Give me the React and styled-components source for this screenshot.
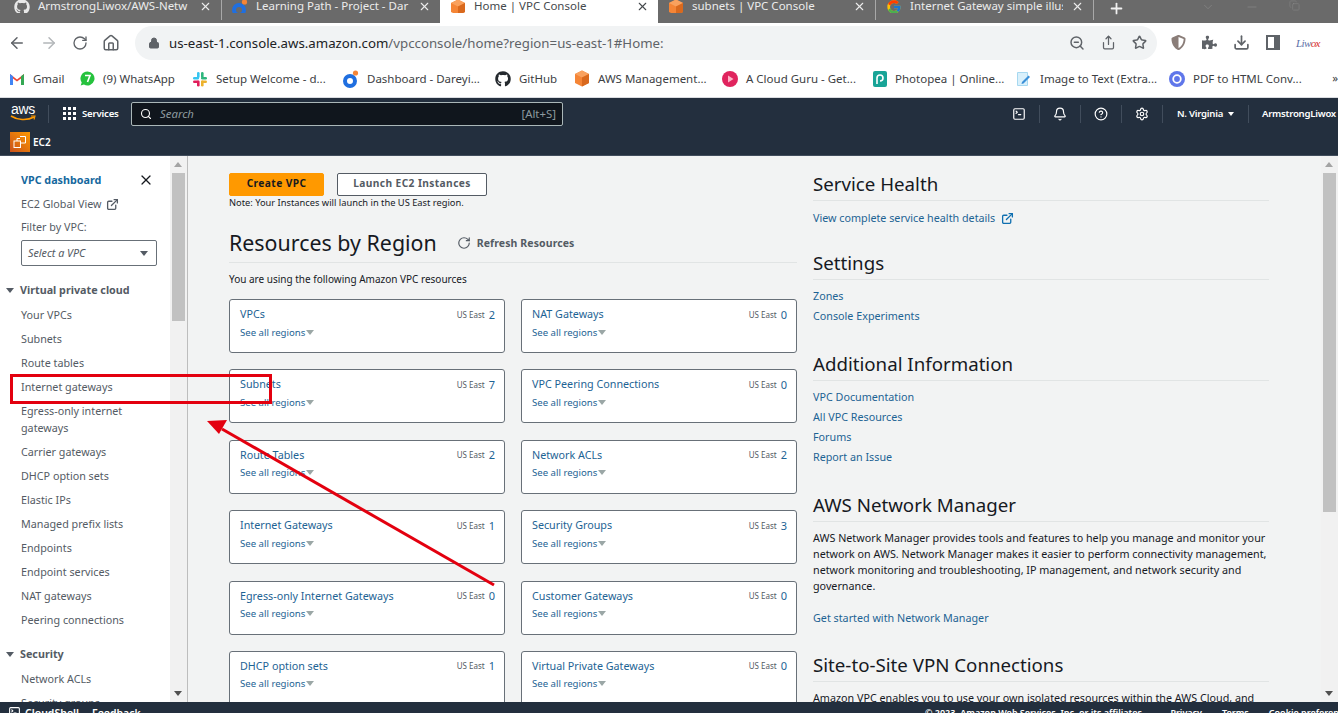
import styled, { createGlobalStyle } from 'styled-components';
import { ArrowLeft, ArrowRight, RotateCw, Home, Lock, ZoomOut, Share, Star, Download, Search, X, Bell, CircleHelp, Settings, ExternalLink, Plus, ChevronDown, Minus, Copy, TerminalSquare } from 'lucide-react';
import { FaGithub, FaPuzzlePiece, FaShieldAlt } from 'react-icons/fa';
import { FcGoogle } from 'react-icons/fc';

const GlobalStyle = createGlobalStyle`
  html, body { margin: 0; padding: 0; height: 713px; overflow: hidden; background: #fff; }
  * { box-sizing: border-box; }
  body { font-family: "Noto Sans", "Open Sans", sans-serif; }
`;

const Page = styled.div`
  position: relative;
  width: 1338px;
  height: 713px;
  overflow: hidden;
  display: flex;
  flex-direction: column;
`;

/* browser chrome */
const TabStrip = styled.div`
  height: 23px;
  flex: none;
  background: #6a6a6a;
  display: flex;
  padding-left: 4px;
  color: #f1f1f1;
  font-size: 11.5px;
`;

const Tab = styled.div`
  width: 218px;
  display: flex;
  align-items: flex-start;
  padding: 0 9px 0 10px;
  gap: 8px;
  line-height: 16px;
  background: ${p => (p.$active ? '#fff' : 'transparent')};
  color: ${p => (p.$active ? '#45494d' : '#ececec')};
  border-right: ${p => (p.$divider ? '1px solid #a8a8a8' : 'none')};
  height: ${p => (p.$active ? '23px' : '20px')};
  svg { flex: none; }
`;

const TabIcon = styled.span`
  width: 16px;
  height: 14px;
  margin-top: -1px;
  flex: none;
  display: flex;
  justify-content: center;
  overflow: hidden;
`;

const TabTitle = styled.span`
  flex: 1;
  overflow: hidden;
  white-space: nowrap;
  margin-top: -2px;
`;

const TabClose = styled.span`
  flex: none;
  display: flex;
`;

const NewTab = styled.div`
  margin-left: 14px;
  display: flex;
  align-items: flex-start;
  height: 14px;
`;

const WindowControls = styled.div`
  display: flex;
  margin-left: auto;
  gap: 30px;
  padding: 0 38px 0 0;
  color: #8d8d8d;
  height: 10px;
`;

const Toolbar = styled.div`
  height: 39px;
  flex: none;
  display: flex;
  align-items: center;
  padding: 0 0 0 8px;
  color: #5f6368;
  background: #fff;
`;

const NavButtons = styled.div`
  display: flex;
  align-items: center;
  gap: 14px;
  width: 127px;
`;

const Omnibox = styled.div`
  width: 1022px;
  height: 34px;
  border-radius: 17px;
  background: #f1f3f4;
  display: flex;
  align-items: center;
  padding: 0 10px 0 13px;
  font-size: 13.25px;
`;

const Host = styled.span`
  color: #202124;
  margin-left: 9px;
`;

const UrlRest = styled.span`
  color: #5f6368;
  flex: 1;
`;

const OmniActions = styled.div`
  display: flex;
  align-items: center;
  gap: 16px;
`;

const Extensions = styled.div`
  display: flex;
  align-items: center;
  gap: 16px;
  margin-left: 14px;
`;

const Signature = styled.span`
  font-family: "Liberation Serif", serif;
  font-style: italic;
  font-size: 11px;
  color: #5b6fa8;
  letter-spacing: -0.6px;
  i { color: #d62b2b; }
`;

const Bookmarks = styled.div`
  height: 36px;
  flex: none;
  display: flex;
  align-items: center;
  padding: 0 0 2px 9px;
  gap: 16px;
  background: #fff;
  border-bottom: 1px solid #dadce0;
  font-size: 11.5px;
  color: #3c4043;
  position: relative;
`;

const Bookmark = styled.div`
  display: flex;
  align-items: center;
  gap: 8px;
  flex: none;
  svg { flex: none; }
`;

const BookmarkLabel = styled.span`
  width: ${p => p.$w}px;
  white-space: nowrap;
`;

const Overflow = styled.span`
  position: absolute;
  right: 0;
  top: 8px;
`;

/* aws console header */
const AwsHeader = styled.header`
  height: 58px;
  flex: none;
  background: #232f3e;
  color: #fff;
  border-bottom: 1px solid #414d5c;
`;

const TopNav = styled.div`
  height: 31px;
  display: flex;
  align-items: center;
  padding: 0 0 0 10px;
  font-size: 9.6px;
`;

const AwsLogo = styled.div`
  width: 26px;
  height: 21px;
  font-family: "Liberation Sans", sans-serif;
  font-size: 14px;
  line-height: 13px;
  text-align: center;
  letter-spacing: -0.3px;
  svg { display: block; margin-top: -1px; }
`;

const NavDivider = styled.span`
  width: 1px;
  height: 18px;
  background: #414d5c;
  margin: ${p => p.$m || '0'};
  flex: none;
`;

const ServicesBtn = styled.div`
  display: flex;
  align-items: center;
  gap: 6px;
  font-weight: 600;
  width: 68px;
  letter-spacing: -0.2px;
`;

const DotGrid = styled.span`
  display: grid;
  grid-template-columns: repeat(3, 3px);
  gap: 2px;
  i { width: 3px; height: 3px; background: #fff; display: block; }
`;

const SearchBox = styled.div`
  width: 432px;
  height: 24px;
  background: #10161d;
  border: 1px solid #aab7b8;
  border-radius: 2px;
  display: flex;
  align-items: center;
  padding: 0 6px 0 8px;
  gap: 8px;
  font-size: 11.4px;
  color: #8d9a9f;
`;

const SearchHint = styled.span`
  font-style: italic;
  flex: 1;
`;

const NavRight = styled.div`
  margin-left: auto;
  display: flex;
  align-items: center;
`;

const NavIcon = styled.span`
  width: 40px;
  display: flex;
  justify-content: center;
`;

const NavText = styled.span`
  display: flex;
  align-items: center;
  gap: 5px;
  font-weight: 600;
  white-space: nowrap;
  letter-spacing: -0.25px;
  width: ${p => p.$w}px;
`;

const ServiceBar = styled.div`
  height: 26px;
  display: flex;
  align-items: center;
  padding-left: 10px;
  gap: 3px;
  font-size: 10px;
  font-weight: 600;
`;

const ServiceIcon = styled.span`
  width: 20px;
  height: 20px;
  background: linear-gradient(45deg, #c8511b, #ff9900);
  display: flex;
  align-items: center;
  justify-content: center;
`;

/* page body */
const Body = styled.div`
  height: 546px;
  flex: none;
  display: flex;
  overflow: hidden;
  background: #f2f3f3;
`;

const Sidebar = styled.nav`
  width: 170px;
  flex: none;
  background: #fff;
  padding: 14px 0 0 21px;
  font-size: 10.75px;
  color: #545b64;
  overflow: hidden;
`;

const SideTop = styled.div`
  display: flex;
  justify-content: space-between;
  align-items: center;
  height: 20px;
  padding-right: 16px;
`;

const ActiveLink = styled.span`
  color: #15689e;
  font-weight: 700;
`;

const SideLine = styled.div`
  display: flex;
  align-items: center;
  gap: 4px;
  height: 24px;
  margin-top: ${p => p.$top || 0}px;
  color: #545b64;
  white-space: nowrap;
`;

const Select = styled.div`
  width: 136px;
  height: 26px;
  margin-top: 1px;
  border: 1px solid #687078;
  border-radius: 2px;
  display: flex;
  align-items: center;
  justify-content: space-between;
  padding: 0 8px 0 6px;
  font-style: italic;
  background: #fff;
`;

const Caret = styled.span`
  width: 0;
  height: 0;
  flex: none;
  border-left: ${p => p.$s || 4}px solid transparent;
  border-right: ${p => p.$s || 4}px solid transparent;
  border-top: ${p => (p.$s || 4) + 1}px solid ${p => p.$c || '#545b64'};
`;

const GroupTitle = styled.div`
  display: flex;
  align-items: center;
  height: 24px;
  gap: 6px;
  margin: ${p => p.$top}px 0 1px -15px;
  font-weight: 700;
  color: #545b64;
`;

const NavItem = styled.div`
  line-height: 17px;
  padding: 3.5px 0;
  white-space: pre-line;
`;

const ScrollTrack = styled.div`
  width: ${p => (p.$w || 17)}px;
  flex: none;
  background: #f1f1f1;
  position: relative;
  border-right: ${p => (p.$line ? '1px solid #bdbdbd' : 'none')};
`;

const ScrollArrow = styled.span`
  position: absolute;
  left: 4px;
  width: 0;
  height: 0;
  border-left: 4px solid transparent;
  border-right: 4px solid transparent;
  ${p => (p.$up
    ? `top: 6px; border-bottom: 5px solid #a3a3a3;`
    : `bottom: 6px; border-top: 5px solid #505050;`)}
`;

const ScrollThumb = styled.span`
  position: absolute;
  left: 2px;
  width: 13px;
  top: 17px;
  height: ${p => p.$h}px;
  background: #c1c1c1;
`;

const Main = styled.main`
  flex: 1;
  display: grid;
  grid-template-columns: 568px 456px;
  column-gap: 16px;
  padding: 17px 0 0 41px;
  overflow: hidden;
  font-size: 10.75px;
  color: #16191f;
  align-content: start;
`;

const RightColumn = styled.div`
  margin-top: -1px;
`;

const ButtonRow = styled.div`
  display: flex;
  gap: 13px;
`;

const Btn = styled.div`
  height: 23px;
  width: ${p => p.$w}px;
  border-radius: 2px;
  display: flex;
  align-items: center;
  justify-content: center;
  padding-bottom: 3px;
  font-weight: 700;
  font-size: 10.2px;
  letter-spacing: 0.4px;
  color: ${p => (p.$primary ? '#16191f' : '#545b64')};
  background: ${p => (p.$primary ? '#ff9900' : '#fff')};
  border: 1px solid ${p => (p.$primary ? '#ff9900' : '#545b64')};
`;

const Note = styled.div`
  font-size: 9.3px;
  line-height: 14px;
  color: #16191f;
`;

const RegionHead = styled.div`
  display: flex;
  align-items: center;
  margin-top: 18px;
  height: 35px;
  padding-bottom: 5px;
  border-bottom: 1px solid #e1e4e4;
  gap: 20px;
`;

const RegionTitle = styled.h1`
  margin: 0;
  font-size: 21.4px;
  font-weight: 400;
  line-height: 28px;
  color: #16191f;
`;

const RefreshLink = styled.span`
  display: flex;
  align-items: center;
  gap: 6px;
  font-weight: 700;
  font-size: 10.5px;
  letter-spacing: 0.1px;
  color: #545b64;
`;

const Using = styled.div`
  margin-top: 8px;
  line-height: 16px;
  font-size: 10px;
  color: #16191f;
`;

const CardGrid = styled.div`
  margin-top: 12px;
  display: grid;
  grid-template-columns: 276px 276px;
  column-gap: 16px;
  row-gap: 16.4px;
`;

const Card = styled.div`
  height: 54px;
  background: #fff;
  border: 1px solid #687078;
  border-radius: 3px;
  padding: 6px 9px 0 10px;
`;

const CardTop = styled.div`
  display: flex;
  justify-content: space-between;
  align-items: center;
  height: 16px;
`;

const CardLink = styled.span`
  color: #1d6394;
`;

const CardRegion = styled.span`
  display: flex;
  align-items: center;
  gap: 4px;
  font-size: 8px;
  color: #545b64;
`;

const CardCount = styled.span`
  font-size: 11px;
  color: #1d6394;
`;

const SeeAll = styled.div`
  display: flex;
  align-items: center;
  gap: 1px;
  height: 18px;
  margin-top: 1px;
  font-size: 9.6px;
  color: #1d6394;
`;

const Section = styled.section`
  margin-bottom: ${p => p.$tail ?? 25}px;
`;

const SectionTitle = styled.h2`
  margin: 0;
  height: 29px;
  line-height: 24px;
  font-size: 18.7px;
  font-weight: 400;
  color: #16191f;
  border-bottom: 1px solid #e1e4e4;
`;

const LinkList = styled.div`
  margin-top: ${p => p.$top ?? 6}px;
`;

const SideLink = styled.div`
  line-height: 20px;
  color: #1d6394;
  display: flex;
  align-items: center;
  gap: 6px;
`;

const Para = styled.p`
  margin: 8px 0 14px;
  line-height: 16px;
  color: #16191f;
  width: 458px;
`;

const Footer = styled.footer`
  flex: 1;
  background: #232f3e;
  color: #fff;
  display: flex;
  font-weight: 600;
  padding: 4px 0 0 8px;
  line-height: 14px;
  white-space: nowrap;
  overflow: hidden;
`;

const FootLeft = styled.div`
  display: flex;
  gap: 13px;
  width: 917px;
  flex: none;
  font-size: 10.5px;
`;

const FootCloud = styled.span`
  display: flex;
  gap: 4px;
`;

const FootRight = styled.div`
  display: flex;
  gap: 20px;
  flex: none;
  font-size: 9px;
`;

const FootCopy = styled.span`
  margin-right: 6px;
`;

/* annotation */
const RedBox = styled.div`
  position: absolute;
  left: 10px;
  top: 374px;
  width: 262px;
  height: 30px;
  border: 3px solid #e3000f;
`;

const ArrowLayer = styled.svg`
  position: absolute;
  left: 0;
  top: 0;
  pointer-events: none;
`;

const tabs = [
  { title: 'ArmstrongLiwox/AWS-Netw', icon: <FaGithub size={16} color="#e8e8e8" />, divider: true },
  { title: 'Learning Path - Project - Dar', icon: <DareIcon /> },
  { title: 'Home | VPC Console', icon: <CubeIcon />, active: true },
  { title: 'subnets | VPC Console', icon: <CubeIcon />, divider: true },
  { title: 'Internet Gateway simple illus', icon: <FcGoogle size={16} />, divider: true },
];

const bookmarks = [
  { label: 'Gmail', w: 31, icon: <GmailIcon /> },
  { label: '(9) WhatsApp', w: 73, icon: <WhatsIcon /> },
  { label: 'Setup Welcome - d...', w: 111, icon: <SlackIcon /> },
  { label: 'Dashboard - Dareyi...', w: 112, icon: <DareIcon /> },
  { label: 'GitHub', w: 39, icon: <FaGithub size={16} color="#24292e" /> },
  { label: 'AWS Management...', w: 108, icon: <CubeIcon /> },
  { label: 'A Cloud Guru - Get...', w: 111, icon: <GuruIcon /> },
  { label: 'Photopea | Online...', w: 105, icon: <PhotopeaIcon /> },
  { label: 'Image to Text (Extra...', w: 113, icon: <ImageTextIcon /> },
  { label: 'PDF to HTML Conv...', w: 110, icon: <PdfIcon /> },
];

const vpcItems = ['Your VPCs', 'Subnets', 'Route tables', 'Internet gateways', 'Egress-only internet\ngateways', 'Carrier gateways', 'DHCP option sets', 'Elastic IPs', 'Managed prefix lists', 'Endpoints', 'Endpoint services', 'NAT gateways', 'Peering connections'];

const cards = [
  ['VPCs', 2, 'NAT Gateways', 0],
  ['Subnets', 7, 'VPC Peering Connections', 0],
  ['Route Tables', 2, 'Network ACLs', 2],
  ['Internet Gateways', 1, 'Security Groups', 3],
  ['Egress-only Internet Gateways', 0, 'Customer Gateways', 0],
  ['DHCP option sets', 1, 'Virtual Private Gateways', 0],
].flatMap(([a, b, c, d]) => [[a, b], [c, d]]);

function CubeIcon() {
  return (
    <svg width="16" height="17" viewBox="0 0 16 17">
      <path d="M8 0.5 15 4v9l-7 3.5L1 13V4z" fill="#f58536" />
      <path d="M8 0.5 15 4 8 7.5 1 4z" fill="#f9a15e" />
      <path d="M8 7.5 15 4v9l-7 3.5z" fill="#d9691e" />
    </svg>
  );
}

function DareIcon() {
  return (
    <svg width="16" height="18" viewBox="0 0 16 18">
      <circle cx="7" cy="11" r="5" fill="none" stroke="#1f6fe0" strokeWidth="4" />
      <circle cx="12.5" cy="3" r="2.6" fill="#f58536" />
    </svg>
  );
}

function GmailIcon() {
  return (
    <svg width="16" height="13" viewBox="0 0 16 13">
      <path d="M1 13V2l7 5.5L15 2v11h-3V6.5L8 9.6 4 6.5V13z" fill="#ea4335" />
      <path d="M1 13V2l3 2.3V13z" fill="#4285f4" />
      <path d="M15 13V2l-3 2.3V13z" fill="#34a853" />
    </svg>
  );
}

function WhatsIcon() {
  return (
    <svg width="15" height="15" viewBox="0 0 15 15">
      <path d="M7.5 0.5a7 7 0 1 1-3.6 13l-3.2 1 1-3.1A7 7 0 0 1 7.5 0.5z" fill="#25c23d" />
      <path d="M5 4.5h5L7.5 11" fill="none" stroke="#fff" strokeWidth="1.6" />
    </svg>
  );
}

function SlackIcon() {
  return (
    <svg width="16" height="16" viewBox="0 0 16 16">
      <rect x="1" y="6" width="6" height="2.6" rx="1.3" fill="#36c5f0" />
      <rect x="5" y="1" width="2.6" height="6" rx="1.3" fill="#36c5f0" />
      <rect x="9" y="1" width="2.6" height="6" rx="1.3" fill="#2eb67d" />
      <rect x="9" y="6" width="6" height="2.6" rx="1.3" fill="#2eb67d" />
      <rect x="9" y="9.5" width="6" height="2.6" rx="1.3" fill="#ecb22e" />
      <rect x="9" y="9.5" width="2.6" height="6" rx="1.3" fill="#ecb22e" />
      <rect x="1" y="9.5" width="6" height="2.6" rx="1.3" fill="#e01e5a" />
      <rect x="5" y="9.5" width="2.6" height="6" rx="1.3" fill="#e01e5a" />
    </svg>
  );
}

function GuruIcon() {
  return (
    <svg width="16" height="16" viewBox="0 0 16 16">
      <circle cx="8" cy="8" r="8" fill="#e0245e" />
      <path d="M6 4.5v7l5.5-3.5z" fill="#ffb3c7" />
    </svg>
  );
}

function PhotopeaIcon() {
  return (
    <svg width="14" height="16" viewBox="0 0 14 16">
      <rect width="14" height="16" rx="2" fill="#18a497" />
      <path d="M4 13V7a3 3 0 1 1 3 3" fill="none" stroke="#fff" strokeWidth="1.6" />
    </svg>
  );
}

function ImageTextIcon() {
  return (
    <svg width="16" height="16" viewBox="0 0 16 16">
      <path d="M1.5 1.5h10v13h-10z" fill="#d9f0fb" stroke="#a6d8f0" />
      <path d="M6 11l6.5-6.5 1.5 1.5L7.5 12.5 5.5 13z" fill="#3b8fd8" />
    </svg>
  );
}

function PdfIcon() {
  return (
    <svg width="16" height="16" viewBox="0 0 16 16">
      <circle cx="8" cy="8" r="8" fill="#5f76ea" />
      <circle cx="8" cy="8" r="3.8" fill="none" stroke="#fff" strokeWidth="1.8" />
    </svg>
  );
}

function Ec2Glyph() {
  return (
    <svg width="14" height="14" viewBox="0 0 14 14" fill="none" stroke="#fff" strokeWidth="1">
      <rect x="1" y="6" width="6.5" height="6.5" />
      <path d="M4 6V3.5h3M7 1.5h5.5V8H8" />
    </svg>
  );
}

export default function App() {
  return (
    <Page>
      <GlobalStyle />
      <TabStrip>
        {tabs.map(t => (
          <Tab key={t.title} $active={t.active} $divider={t.divider}>
            <TabIcon>{t.icon}</TabIcon>
            <TabTitle>{t.title}</TabTitle>
            <TabClose><X size={13} strokeWidth={2} /></TabClose>
          </Tab>
        ))}
        <NewTab><Plus size={17} strokeWidth={2.5} /></NewTab>
        <WindowControls>
          <ChevronDown size={14} strokeWidth={1} />
          <Minus size={14} strokeWidth={1} />
          <Copy size={11} strokeWidth={1} />
        </WindowControls>
      </TabStrip>

      <Toolbar>
        <NavButtons>
          <ArrowLeft size={18} strokeWidth={2} />
          <ArrowRight size={18} strokeWidth={2} color="#b3b6b9" />
          <RotateCw size={16} strokeWidth={2} />
          <Home size={18} strokeWidth={2} />
        </NavButtons>
        <Omnibox>
          <Lock size={12} fill="#5f6368" strokeWidth={2} />
          <Host>us-east-1.console.aws.amazon.com</Host>
          <UrlRest>/vpcconsole/home?region=us-east-1#Home:</UrlRest>
          <OmniActions>
            <ZoomOut size={16} strokeWidth={2.2} />
            <Share size={15} />
            <Star size={15} strokeWidth={2.4} />
          </OmniActions>
        </Omnibox>
        <Extensions>
          <FaShieldAlt size={15} color="#8a7d78" />
          <FaPuzzlePiece size={15} />
          <Download size={17} strokeWidth={2.4} />
          <svg width="14" height="15" viewBox="0 0 14 15"><path d="M0 0h14v15H0z M2 2v11h6V2z" fill="#5f6368" fillRule="evenodd" /></svg>
          <Signature>Liw<i>ox</i></Signature>
        </Extensions>
      </Toolbar>

      <Bookmarks>
        {bookmarks.map(b => (
          <Bookmark key={b.label}>
            {b.icon}
            <BookmarkLabel $w={b.w}>{b.label}</BookmarkLabel>
          </Bookmark>
        ))}
        <Overflow>»</Overflow>
      </Bookmarks>

      <AwsHeader>
        <TopNav>
          <AwsLogo>
            aws
            <svg width="26" height="7" viewBox="0 0 26 7" fill="none">
              <path d="M1 1c6 4 16 5 23 1" stroke="#ff9900" strokeWidth="1.6" />
              <path d="M21 1l4 0-1 3.5" stroke="#ff9900" strokeWidth="1.1" />
            </svg>
          </AwsLogo>
          <NavDivider $m="0 14px 0 12px" />
          <ServicesBtn>
            <DotGrid>{Array.from({ length: 9 }, (_, i) => <i key={i} />)}</DotGrid>
            Services
          </ServicesBtn>
          <SearchBox>
            <Search size={12} color="#fff" strokeWidth={2.2} />
            <SearchHint>Search</SearchHint>
            <span>[Alt+S]</span>
          </SearchBox>
          <NavRight>
            <NavIcon><TerminalSquare size={14} /></NavIcon>
            <NavDivider />
            <NavIcon><Bell size={14} fill="none" strokeWidth={2} /></NavIcon>
            <NavDivider />
            <NavIcon><CircleHelp size={14} strokeWidth={2} /></NavIcon>
            <NavDivider />
            <NavIcon><Settings size={14} strokeWidth={2} /></NavIcon>
            <NavDivider $m="0 14px 0 0" />
            <NavText $w={57}>N. Virginia<Caret $s={3} $c="#fff" /></NavText>
            <NavDivider $m="0 13px 0 14px" />
            <NavText $w={76}>ArmstrongLiwox</NavText>
          </NavRight>
        </TopNav>
        <ServiceBar>
          <ServiceIcon><Ec2Glyph /></ServiceIcon>
          EC2
        </ServiceBar>
      </AwsHeader>

      <Body>
        <Sidebar>
          <SideTop>
            <ActiveLink>VPC dashboard</ActiveLink>
            <X size={16} strokeWidth={1.8} color="#16191f" />
          </SideTop>
          <SideLine $top={2}>EC2 Global View <ExternalLink size={13} strokeWidth={2.4} /></SideLine>
          <SideLine $top={-1}>Filter by VPC:</SideLine>
          <Select>Select a VPC<Caret $s={4} /></Select>
          <GroupTitle $top={12}><Caret $s={4} />Virtual private cloud</GroupTitle>
          {vpcItems.map(i => <NavItem key={i}>{i}</NavItem>)}
          <GroupTitle $top={10}><Caret $s={4} />Security</GroupTitle>
          <NavItem>Network ACLs</NavItem>
          <NavItem>Security groups</NavItem>
        </Sidebar>
        <ScrollTrack $w={18} $line>
          <ScrollArrow $up />
          <ScrollThumb $h={148} />
          <ScrollArrow />
        </ScrollTrack>

        <Main>
          <div>
            <ButtonRow>
              <Btn $primary $w={95}>Create VPC</Btn>
              <Btn $w={150}>Launch EC2 Instances</Btn>
            </ButtonRow>
            <Note>Note: Your Instances will launch in the US East region.</Note>
            <RegionHead>
              <RegionTitle>Resources by Region</RegionTitle>
              <RefreshLink><RotateCw size={14} strokeWidth={2} />Refresh Resources</RefreshLink>
            </RegionHead>
            <Using>You are using the following Amazon VPC resources</Using>
            <CardGrid>
              {cards.map(([name, count]) => (
                <Card key={name}>
                  <CardTop>
                    <CardLink>{name}</CardLink>
                    <CardRegion>US East <CardCount>{count}</CardCount></CardRegion>
                  </CardTop>
                  <SeeAll>See all regions<Caret $s={4} $c="#9ba7a6" /></SeeAll>
                </Card>
              ))}
            </CardGrid>
          </div>

          <RightColumn>
            <Section $tail={23}>
              <SectionTitle>Service Health</SectionTitle>
              <LinkList $top={7}>
                <SideLink>View complete service health details <ExternalLink size={13} strokeWidth={2.4} color="#0f6fb0" /></SideLink>
              </LinkList>
            </Section>
            <Section $tail={26}>
              <SectionTitle>Settings</SectionTitle>
              <LinkList>
                <SideLink>Zones</SideLink>
                <SideLink>Console Experiments</SideLink>
              </LinkList>
            </Section>
            <Section $tail={26}>
              <SectionTitle>Additional Information</SectionTitle>
              <LinkList>
                <SideLink>VPC Documentation</SideLink>
                <SideLink>All VPC Resources</SideLink>
                <SideLink>Forums</SideLink>
                <SideLink>Report an Issue</SideLink>
              </LinkList>
            </Section>
            <Section>
              <SectionTitle>AWS Network Manager</SectionTitle>
              <Para>AWS Network Manager provides tools and features to help you manage and monitor your network on AWS. Network Manager makes it easier to perform connectivity management, network monitoring and troubleshooting, IP management, and network security and governance.</Para>
              <SideLink>Get started with Network Manager</SideLink>
            </Section>
            <Section>
              <SectionTitle>Site-to-Site VPN Connections</SectionTitle>
              <Para>Amazon VPC enables you to use your own isolated resources within the AWS Cloud, and then connect those resources directly to your own datacenter.</Para>
            </Section>
          </RightColumn>
        </Main>
        <ScrollTrack>
          <ScrollArrow $up />
          <ScrollThumb $h={339} />
          <ScrollArrow />
        </ScrollTrack>
      </Body>

      <Footer>
        <FootLeft>
          <FootCloud><TerminalSquare size={13} />CloudShell</FootCloud>
          <span>Feedback</span>
        </FootLeft>
        <FootRight>
          <FootCopy>© 2023, Amazon Web Services, Inc. or its affiliates.</FootCopy>
          <span>Privacy</span>
          <span>Terms</span>
          <span>Cookie preferences</span>
        </FootRight>
      </Footer>

      <RedBox />
      <ArrowLayer width="1338" height="713" viewBox="0 0 1338 713">
        <line x1="494" y1="585" x2="222" y2="429" stroke="#e3000f" strokeWidth="3" />
        <path d="M207 421l20-1-8 14z" fill="#e3000f" />
      </ArrowLayer>
    </Page>
  );
}
